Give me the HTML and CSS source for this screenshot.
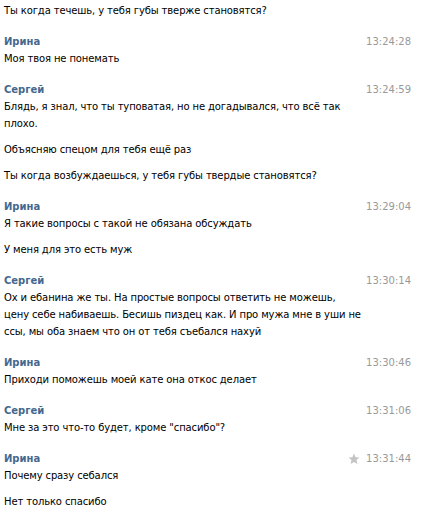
FILE: index.html
```html
<!DOCTYPE html>
<html lang="ru">
<head>
<meta charset="utf-8">
<link rel="stylesheet" href="styles.css">
</head>
<body>
<div class="chat">
  <div class="group first">
    <div class="text">Ты когда течешь, у тебя губы тверже становятся?</div>
  </div>
  <div class="group">
    <div class="head"><span class="name">Ирина</span><span class="time">13:24:28</span></div>
    <div class="text">Моя твоя не понемать</div>
  </div>
  <div class="group">
    <div class="head"><span class="name">Сергей</span><span class="time">13:24:59</span></div>
    <div class="text">Блядь, я знал, что ты туповатая, но не догадывался, что всё так<br>плохо.</div>
    <div class="text">Объясняю спецом для тебя ещё раз</div>
    <div class="text">Ты когда возбуждаешься, у тебя губы твердые становятся?</div>
  </div>
  <div class="group">
    <div class="head"><span class="name">Ирина</span><span class="time">13:29:04</span></div>
    <div class="text">Я такие вопросы с такой не обязана обсуждать</div>
    <div class="text">У меня для это есть муж</div>
  </div>
  <div class="group">
    <div class="head"><span class="name">Сергей</span><span class="time">13:30:14</span></div>
    <div class="text">Ох и ебанина же ты. На простые вопросы ответить не можешь,<br>цену себе набиваешь. Бесишь пиздец как. И про мужа мне в уши не<br>ссы, мы оба знаем что он от тебя съебался нахуй</div>
  </div>
  <div class="group">
    <div class="head"><span class="name">Ирина</span><span class="time">13:30:46</span></div>
    <div class="text">Приходи поможешь моей кате она откос делает</div>
  </div>
  <div class="group">
    <div class="head"><span class="name">Сергей</span><span class="time">13:31:06</span></div>
    <div class="text">Мне за это что-то будет, кроме "спасибо"?</div>
  </div>
  <div class="group">
    <div class="head"><span class="name">Ирина</span><span class="meta"><svg class="star" viewBox="0 0 12 12" width="12" height="12"><path d="M6 0.6 L7.6 4.2 L11.5 4.5 L8.5 7.1 L9.4 11 L6 8.9 L2.6 11 L3.5 7.1 L0.5 4.5 L4.4 4.2 Z" fill="#c4c4c4"/></svg><span class="time">13:31:44</span></span></div>
    <div class="text">Почему сразу себался</div>
    <div class="text">Нет только спасибо</div>
  </div>
</div>
</body>
</html>
```
FILE: styles.css
```css
html, body {
  margin: 0;
  padding: 0;
  background: #fff;
}
.chat {
  width: 425px;
  box-sizing: border-box;
  padding: 2px 14px 0 4px;
  font-family: "DejaVu Sans", Tahoma, sans-serif;
  font-size: 10px;
  color: #000;
}
.group {
  margin-top: 14px;
}
.group.first {
  margin-top: 0;
}
.head {
  display: flex;
  justify-content: space-between;
  align-items: center;
  height: 17px;
  line-height: 17px;
}
.name {
  font-weight: bold;
  color: #45688e;
}
.time {
  color: #999;
}
.meta {
  display: flex;
  align-items: center;
  gap: 6px;
}
.star {
  display: block;
}
.text {
  line-height: 17px;
  max-width: 370px;
  letter-spacing: -0.12px;
}
.text + .text {
  margin-top: 9px;
}
```
